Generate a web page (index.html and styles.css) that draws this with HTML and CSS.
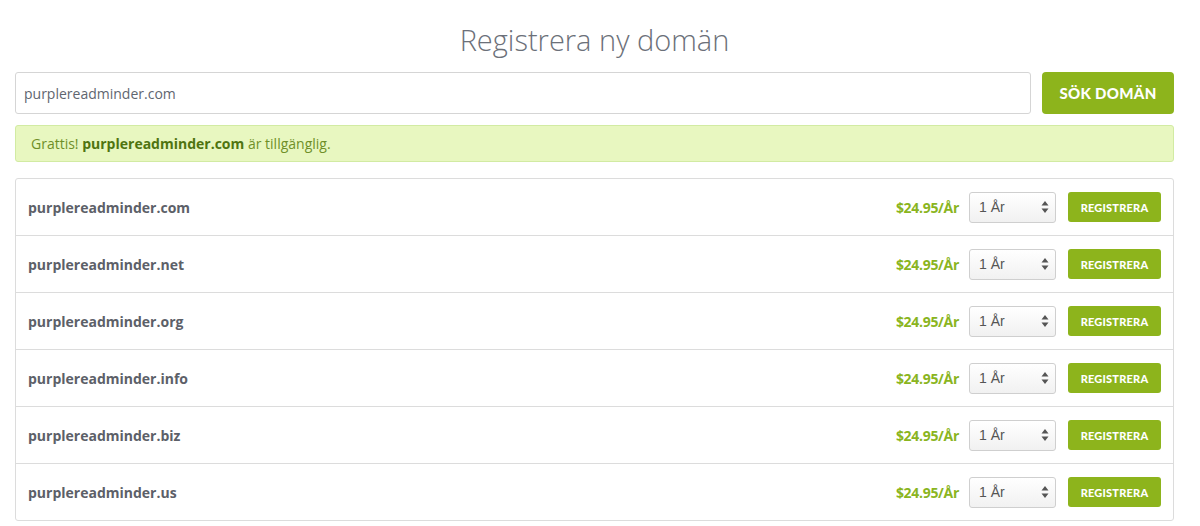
FILE: index.html
```html
<!DOCTYPE html>
<html lang="sv">
<head>
   <meta charset="UTF-8">
   <meta name="viewport" content="width=device-width, initial-scale=1.0">
   <title>Registrera ny domän</title>
   <link rel="stylesheet" href="styles.css">
</head>
<body>
   <div class="container">
      <h1 class="title">Registrera ny domän</h1>

      <form class="search">
         <input type="text" class="search-input" value="purplereadminder.com">
         <button type="button" class="search-btn">SÖK DOMÄN</button>
      </form>

      <div class="alert">Grattis! <strong>purplereadminder.com</strong> är tillgänglig.</div>

      <div class="results">
         <div class="row">
            <span class="domain">purplereadminder.com</span>
            <span class="price">$24.95/År</span>
            <div class="select"><span>1 År</span><svg width="8" height="14" viewBox="0 0 8 14"><path d="M4 1 L7.5 5.5 H0.5 Z M4 13 L7.5 8.5 H0.5 Z" fill="#555"/></svg></div>
            <button class="reg-btn">REGISTRERA</button>
         </div>
         <div class="row">
            <span class="domain">purplereadminder.net</span>
            <span class="price">$24.95/År</span>
            <div class="select"><span>1 År</span><svg width="8" height="14" viewBox="0 0 8 14"><path d="M4 1 L7.5 5.5 H0.5 Z M4 13 L7.5 8.5 H0.5 Z" fill="#555"/></svg></div>
            <button class="reg-btn">REGISTRERA</button>
         </div>
         <div class="row">
            <span class="domain">purplereadminder.org</span>
            <span class="price">$24.95/År</span>
            <div class="select"><span>1 År</span><svg width="8" height="14" viewBox="0 0 8 14"><path d="M4 1 L7.5 5.5 H0.5 Z M4 13 L7.5 8.5 H0.5 Z" fill="#555"/></svg></div>
            <button class="reg-btn">REGISTRERA</button>
         </div>
         <div class="row">
            <span class="domain">purplereadminder.info</span>
            <span class="price">$24.95/År</span>
            <div class="select"><span>1 År</span><svg width="8" height="14" viewBox="0 0 8 14"><path d="M4 1 L7.5 5.5 H0.5 Z M4 13 L7.5 8.5 H0.5 Z" fill="#555"/></svg></div>
            <button class="reg-btn">REGISTRERA</button>
         </div>
         <div class="row">
            <span class="domain">purplereadminder.biz</span>
            <span class="price">$24.95/År</span>
            <div class="select"><span>1 År</span><svg width="8" height="14" viewBox="0 0 8 14"><path d="M4 1 L7.5 5.5 H0.5 Z M4 13 L7.5 8.5 H0.5 Z" fill="#555"/></svg></div>
            <button class="reg-btn">REGISTRERA</button>
         </div>
         <div class="row">
            <span class="domain">purplereadminder.us</span>
            <span class="price">$24.95/År</span>
            <div class="select"><span>1 År</span><svg width="8" height="14" viewBox="0 0 8 14"><path d="M4 1 L7.5 5.5 H0.5 Z M4 13 L7.5 8.5 H0.5 Z" fill="#555"/></svg></div>
            <button class="reg-btn">REGISTRERA</button>
         </div>
      </div>
   </div>
</body>
</html>
```

FILE: styles.css
```css
body {
   margin: 0;
   background: #fff;
   font-family: "Open Sans", sans-serif;
}
.container {
   width: 1159px;
   margin-left: 15px;
}
.title {
   margin: 0;
   padding-top: 20px;
   height: 52px;
   line-height: 40px;
   text-align: center;
   font-size: 29px;
   font-weight: 300;
   color: #6b7079;
}
.search {
   display: flex;
   gap: 11px;
   margin: 0;
}
.search-input {
   flex: 1;
   height: 42px;
   box-sizing: border-box;
   border: 1px solid #d5d5d5;
   border-radius: 3px;
   padding: 0 8px;
   font-family: "Open Sans", sans-serif;
   font-size: 14px;
   color: #5f6670;
   outline: none;
}
.search-btn {
   width: 132px;
   height: 42px;
   border: none;
   border-radius: 4px;
   background: #8db41c;
   color: #fff;
   font-family: Lato, sans-serif;
   font-weight: 900;
   font-size: 15px;
   letter-spacing: 0.3px;
}
.alert {
   margin-top: 11px;
   height: 37px;
   box-sizing: border-box;
   padding: 0 15px;
   line-height: 35px;
   background: #e8f7c0;
   border: 1px solid #d2eba3;
   border-radius: 3px;
   font-size: 14px;
   color: #6f8f28;
}
.alert strong {
   color: #4f7410;
}
.results {
   margin-top: 16px;
   border: 1px solid #dcdcdc;
   border-radius: 3px;
}
.row {
   display: flex;
   align-items: center;
   height: 56px;
   padding: 0 12px;
   border-bottom: 1px solid #dcdcdc;
}
.row:last-child {
   border-bottom: none;
}
.domain {
   flex: 1;
   font-size: 14px;
   font-weight: 700;
   color: #5c6068;
}
.price {
   font-size: 14px;
   font-weight: 700;
   letter-spacing: -0.3px;
   color: #8ab51e;
   margin-right: 10px;
}
.select {
   width: 87px;
   height: 31px;
   box-sizing: border-box;
   display: flex;
   align-items: center;
   justify-content: space-between;
   padding: 0 6px 0 9px;
   border: 1px solid #cfcfcf;
   border-radius: 3px;
   background: linear-gradient(#fff, #f1f1f1);
   font-family: "Liberation Sans", Arial, sans-serif;
   font-size: 14px;
   color: #555;
   margin-right: 12px;
}
.reg-btn {
   width: 93px;
   height: 30px;
   border: none;
   border-radius: 3px;
   background: #8db41c;
   color: #fff;
   font-family: Lato, sans-serif;
   font-weight: 900;
   font-size: 11px;
   letter-spacing: 0.2px;
}
```
